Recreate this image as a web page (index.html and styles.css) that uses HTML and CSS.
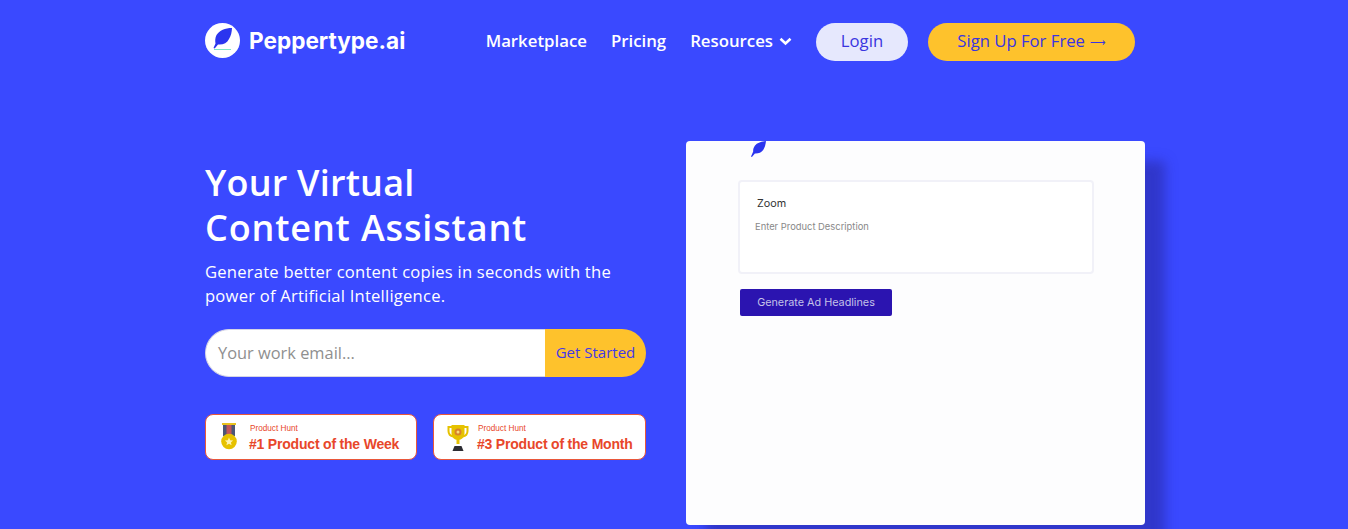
FILE: index.html
```html
<!DOCTYPE html>
<html lang="en">
<head>
<meta charset="utf-8">
<title>Peppertype.ai</title>
<link rel="stylesheet" href="styles.css">
</head>
<body>
<div class="page">
  <header class="nav">
    <a class="brand" href="#">
      <span class="brand-mark">
        <svg width="35" height="35" viewBox="0 0 35 35"><circle cx="17.5" cy="17.5" r="17.5" fill="#fff"/><path d="M27 5C20 5 14.500 7.500 11.500 12 10 15 10 18 10.500 20.500L8.500 25l1.200.6L13 21.500C18 22 22 20 24 16 26 13 26.800 9 27 5z" fill="#2b35ef"/><path d="M9 26.500h17" stroke="#7be8c6" stroke-width="1"/></svg>
      </span>
      <span class="brand-name">Peppertype.ai</span>
    </a>
    <nav class="links">
      <a href="#">Marketplace</a>
      <a href="#">Pricing</a>
      <a href="#" class="resources">Resources
        <svg width="13" height="9" viewBox="0 0 13 9"><path d="M1.500 1.800l5 4.700 5-4.700" fill="none" stroke="#fff" stroke-width="2.600"/></svg>
      </a>
      <a href="#" class="btn btn-login">Login</a>
      <a href="#" class="btn btn-signup">Sign Up For Free <span class="arrow">⟶</span></a>
    </nav>
  </header>
  <main class="hero">
    <section class="copy">
      <h1><span class="line-one">Your Virtual</span><br><span class="line-wide">Content Assistant</span></h1>
      <p class="lead">Generate better content copies in seconds with the power of Artificial Intelligence.</p>
      <form class="signup">
        <span class="email">Your work email...</span>
        <span class="get">Get Started</span>
      </form>
      <div class="badges">
        <div class="badge">
          <svg class="badge-icon" width="16" height="28" viewBox="0 0 16 28"><rect x="1" y="0" width="14" height="2" fill="#e9c21d"/><rect x="2" y="2" width="12" height="11" fill="#4b5675"/><rect x="5.500" y="2" width="5" height="11" fill="#c2575a"/><circle cx="8" cy="18.500" r="7.800" fill="#e6c200"/><path d="M8 14.500l1.200 2.700 2.900.3-2.200 1.900.7 2.900L8 20.800l-2.600 1.500.7-2.900-2.200-1.900 2.900-.3z" fill="#fff3b0"/></svg>
          <div class="badge-text"><span class="ph">Product Hunt</span><strong>#1 Product of the Week</strong></div>
        </div>
        <div class="badge badge-month">
          <svg class="badge-icon" width="22" height="27" viewBox="0 0 22 27"><path d="M5 3H1.500v4c0 3 2 5 5 5.500M17 3h3.500v4c0 3-2 5-5 5.500" fill="none" stroke="#e6c200" stroke-width="2"/><path d="M4.500 1h13v8c0 4-2.500 7-6.500 7s-6.500-3-6.500-7z" fill="#e6c200"/><circle cx="11" cy="8" r="3.500" fill="#d9822b"/><circle cx="11" cy="8" r="1.500" fill="#f5dd7a"/><rect x="9.500" y="15" width="3" height="5" fill="#e6c200"/><path d="M5.500 27l2-5h7l2 5z" fill="#2d2d33"/></svg>
          <div class="badge-text"><span class="ph">Product Hunt</span><strong>#3 Product of the Month</strong></div>
        </div>
      </div>
    </section>
    <aside class="demo">
      <svg class="demo-logo" width="18" height="18" viewBox="0 0 18 18"><path d="M17 0C13 .5 8.500 1.500 6 4.500 4.300 6.800 4 9 4.200 10.500L2 15.500l.9.400 3-3.400c3.500 .2 6.500-1 8.300-3.500C15.800 6.500 16.600 3.500 17 0z" fill="#2b35ef"/></svg>
      <div class="field">
        <div class="field-title">Zoom</div>
        <div class="field-hint">Enter Product Description</div>
      </div>
      <div class="generate">Generate Ad Headlines</div>
    </aside>
  </main>
</div>
</body>
</html>
```
FILE: styles.css
```css
* { box-sizing: border-box; }
html, body { margin: 0; height: 100%; }
body {
  background: #3a49ff;
  font-family: "Open Sans", sans-serif;
  color: #fff;
  overflow: hidden;
}
a { color: inherit; text-decoration: none; }
.page { width: 940px; margin-left: 205px; height: 529px; }
.nav {
  height: 83px;
  padding: 23px 10px 0 0;
  display: flex;
  justify-content: space-between;
  align-items: flex-start;
}
.brand { display: flex; align-items: center; gap: 9px; height: 35px; }
.brand-mark { display: block; width: 35px; height: 35px; }
.brand-mark svg { display: block; }
.brand-name {
  font-family: "Inter", sans-serif;
  font-weight: 700;
  font-size: 22.600px;
}
.links { display: flex; align-items: center; height: 38px; }
.links a {
  margin-right: 24px;
  padding-bottom: 4px;
  white-space: nowrap;
  font-weight: 600;
  font-size: 16.800px;
}
.links a:last-child { margin-right: 0; }
.resources { display: flex; align-items: center; gap: 6px; }
.resources svg { margin-top: 3px; }
.btn {
  display: flex;
  align-items: center;
  justify-content: center;
  height: 38px;
  border-radius: 19px;
  color: #3a35e0;
}
.links .btn { font-weight: 500; font-size: 16.700px; }
.btn-login { width: 92px; background: #e6e8fd; }
.btn-signup { width: 207px; background: #fec22c; gap: 5px; }
.links .btn-login { margin-right: 20px; }
.arrow { font-size: 11px; margin-top: 5px; font-family: "DejaVu Sans", sans-serif; }
.hero { display: flex; align-items: flex-start; padding-top: 58px; }
.copy { width: 481px; flex: none; }
h1 {
  margin: 0;
  padding-top: 19px;
  font-weight: 600;
  font-size: 36px;
  line-height: 45px;
}
.line-one { letter-spacing: .2px; }
.line-wide { letter-spacing: .85px; }
.lead {
  margin: 10px 0 0;
  width: 430px;
  font-weight: 500;
  font-size: 16.600px;
  letter-spacing: .22px;
  line-height: 24px;
}
.signup { display: flex; margin-top: 21px; width: 441px; height: 48px; }
.email {
  flex: 1;
  display: flex;
  align-items: center;
  padding: 0 0 2px 12px;
  background: #fff;
  border: 1px solid #d5d5e5;
  border-right: 0;
  border-radius: 24px 0 0 24px;
  color: #8f8f8f;
  font-size: 16.400px;
}
.get {
  width: 101px;
  display: flex;
  align-items: center;
  justify-content: center;
  padding-bottom: 2px;
  background: #fec22c;
  border-radius: 0 24px 24px 0;
  color: #4338e6;
  font-size: 15px;
  font-weight: 500;
}
.badges { display: flex; gap: 16px; margin-top: 37px; }
.badge {
  width: 212px;
  height: 46px;
  background: #fff;
  border: 1px solid #e9573a;
  border-radius: 8px;
  display: flex;
  align-items: center;
  padding-left: 15px;
  gap: 12px;
}
.badge-month { width: 213px; padding-left: 13px; gap: 8px; }
.badge-icon { flex: none; }
.badge-text {
  display: flex;
  flex-direction: column;
  padding-top: 3px;
  font-family: "Liberation Sans", sans-serif;
  color: #e8472a;
}
.ph { font-size: 8.200px; line-height: 10px; padding-left: 1px; }
.badge-text strong {
  font-size: 14px;
  letter-spacing: -.2px;
  line-height: 20px;
  font-weight: 700;
  white-space: nowrap;
}
.demo {
  width: 459px;
  height: 384px;
  flex: none;
  background: #fdfdfe;
  border-radius: 4px;
  box-shadow: 20px 20px 12px rgba(40, 40, 160, .55);
  padding-left: 52px;
  color: #333;
  font-family: "Inter", sans-serif;
}
.demo-logo { display: block; margin: 0 0 0 11px; height: 18px; }
.field {
  width: 356px;
  height: 94px;
  margin-top: 21px;
  background: #fff;
  border: 2px solid #f1f1f8;
  border-radius: 4px;
  padding: 14px 15px 0;
}
.field-title { font-size: 10.800px; line-height: 16px; padding-left: 2px; color: #333; }
.field-hint { font-size: 9.400px; line-height: 12px; margin-top: 9px; color: #888; }
.generate {
  width: 152px;
  height: 27px;
  margin: 15px 0 0 2px;
  background: #2b14b0;
  color: #c4c1e8;
  border-radius: 2px;
  font-size: 10.800px;
  display: flex;
  align-items: center;
  justify-content: center;
}
```
